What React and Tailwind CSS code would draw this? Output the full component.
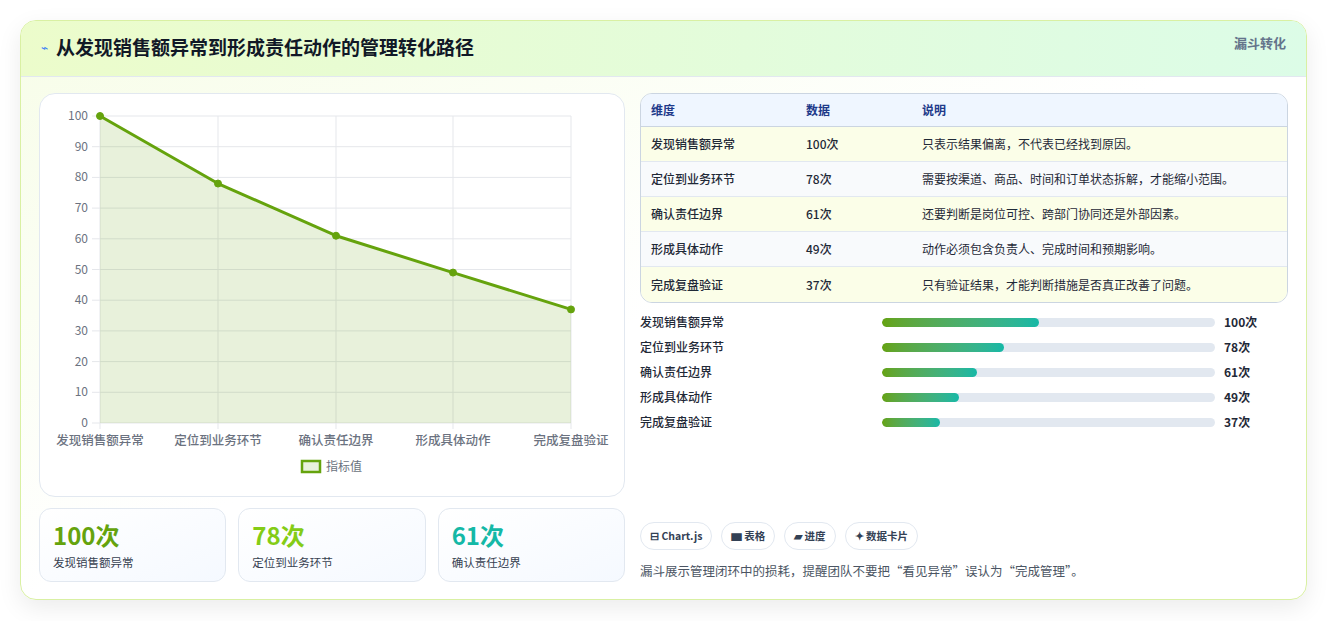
import React from "react";

const rows = [
  { name: "发现销售额异常", v: 100, desc: "只表示结果偏离，不代表已经找到原因。" },
  { name: "定位到业务环节", v: 78, desc: "需要按渠道、商品、时间和订单状态拆解，才能缩小范围。" },
  { name: "确认责任边界", v: 61, desc: "还要判断是岗位可控、跨部门协同还是外部因素。" },
  { name: "形成具体动作", v: 49, desc: "动作必须包含负责人、完成时间和预期影响。" },
  { name: "完成复盘验证", v: 37, desc: "只有验证结果，才能判断措施是否真正改善了问题。" },
];

const font = { fontFamily: '"Noto Sans CJK SC", "Noto Sans", sans-serif' };

function Chart() {
  const xs = [60, 178, 296, 413, 531];
  const y = (v) => 22 + (100 - v) * 3.07;
  const pts = rows.map((r, i) => `${xs[i]},${y(r.v)}`).join(" ");
  return (
    <svg width="585" height="400" className="block">
      {[0, 10, 20, 30, 40, 50, 60, 70, 80, 90, 100].map((t) => (
        <g key={t}>
          <line x1="52" x2="531" y1={y(t)} y2={y(t)} stroke="#e5e7eb" />
          <text x="48" y={y(t) + 4} textAnchor="end" fontSize="12" fill="#6b7280">{t}</text>
        </g>
      ))}
      {xs.map((x) => (
        <line key={x} x1={x} x2={x} y1="22" y2="335" stroke="#e5e7eb" />
      ))}
      <polygon points={`60,329 ${pts} 531,329`} fill="rgba(101,163,13,0.15)" />
      <polyline points={pts} fill="none" stroke="#65a30d" strokeWidth="3" strokeLinejoin="round" />
      {rows.map((r, i) => (
        <circle key={i} cx={xs[i]} cy={y(r.v)} r="3.5" fill="#65a30d" stroke="#65a30d" />
      ))}
      {rows.map((r, i) => (
        <text key={r.name} x={xs[i]} y="351" textAnchor="middle" fontSize="12.5" fontWeight="500" fill="#6b7280">{r.name}</text>
      ))}
      <rect x="262" y="367" width="18" height="11" fill="rgba(101,163,13,0.15)" stroke="#65a30d" strokeWidth="2.5" />
      <text x="286" y="377" fontSize="12" fill="#6b7280">指标值</text>
    </svg>
  );
}

export default function App() {
  const stats = [
    { v: "100次", l: "发现销售额异常", c: "text-[#65a30d]" },
    { v: "78次", l: "定位到业务环节", c: "text-[#84cc16]" },
    { v: "61次", l: "确认责任边界", c: "text-[#14b8a6]" },
  ];
  return (
    <div className="w-[1327px] h-[621px] bg-[#f3f4f6]" style={font}>
      <div className="h-[621px] bg-white pt-5 px-5">
        <div className="rounded-2xl border border-[#d9f0a3] overflow-hidden shadow-[0_8px_24px_rgba(0,0,0,0.08)] bg-gradient-to-br from-[#f7fde8] via-white to-white h-[580px]">
          <div className="h-[56px] flex items-start justify-between px-5 pt-[12px] bg-gradient-to-r from-[#ecfccb] to-[#dcfce7] border-b border-[#e2e8f0]">
            <div className="flex items-center gap-2">
              <span className="text-[#3b82f6] text-xs">⌁</span>
              <span className="text-[19px] font-bold text-[#111827] leading-[28px]">从发现销售额异常到形成责任动作的管理转化路径</span>
            </div>
            <span className="text-[13px] font-bold text-[#64748b]">漏斗转化</span>
          </div>
          <div className="flex gap-[15px] px-[18px] pt-4">
            <div className="w-[586px] flex flex-col gap-[11px]">
              <div className="h-[404px] rounded-2xl border border-[#e2e8f0] bg-white">
                <Chart />
              </div>
              <div className="grid grid-cols-3 gap-[12px]">
                {stats.map((s) => (
                  <div key={s.l} className="h-[74px] rounded-xl border border-[#e2e8f0] bg-gradient-to-br from-white to-[#f5f9ff] px-[13px] pt-[10px]">
                    <div className={`text-[24px] font-bold leading-[32px] ${s.c}`}>{s.v}</div>
                    <div className="text-[11.5px] text-[#374151] mt-[3px]">{s.l}</div>
                  </div>
                ))}
              </div>
            </div>
            <div className="flex-1 flex flex-col">
              <div className="rounded-xl border border-[#cbd5e1] overflow-hidden text-[12px]">
                <div className="flex h-[33px] items-center bg-[#eff6ff] border-b border-[#cbd5e1] font-bold text-[#1e3a8a] px-[10px]">
                  <span className="w-[155px]">维度</span>
                  <span className="w-[116px]">数据</span>
                  <span>说明</span>
                </div>
                {rows.map((r, i) => (
                  <div key={r.name} className={`flex h-[35px] items-center px-[10px] text-[#1f2937] ${i % 2 ? "bg-[#f8fafc]" : "bg-[#fbfee8]"} ${i < 4 ? "border-b border-[#e2e8f0]" : ""}`}>
                    <span className="w-[155px] font-medium">{r.name}</span>
                    <span className="w-[116px] font-medium">{r.v}次</span>
                    <span>{r.desc}</span>
                  </div>
                ))}
              </div>
              <div className="flex flex-col gap-[9px] mt-[11px]">
                {rows.map((r) => (
                  <div key={r.name} className="flex items-center h-4 text-[12px] font-medium text-[#1f2937]">
                    <span className="w-[242px]">{r.name}</span>
                    <div className="w-[333px] h-[9px] rounded-full bg-[#e2e8f0] overflow-hidden">
                      <div className="h-full rounded-full bg-gradient-to-r from-[#65a30d] to-[#14b8a6]" style={{ width: `${r.v * 0.47}%` }} />
                    </div>
                    <span className="ml-[9px] font-bold">{r.v}次</span>
                  </div>
                ))}
              </div>
              <div className="flex gap-[9px] mt-[92px] text-[10.5px] font-semibold text-[#334155]">
                {["⊟ Chart.js", "▆ 表格", "▰ 进度", "✦ 数据卡片"].map((c) => (
                  <span key={c} className="h-[28px] px-[9px] flex items-center rounded-full border border-[#e2e8f0] bg-white">{c}</span>
                ))}
              </div>
              <div className="mt-[12px] text-[12.5px] text-[#4b5563]">漏斗展示管理闭环中的损耗，提醒团队不要把“看见异常”误认为“完成管理”。</div>
            </div>
          </div>
        </div>
      </div>
    </div>
  );
}
